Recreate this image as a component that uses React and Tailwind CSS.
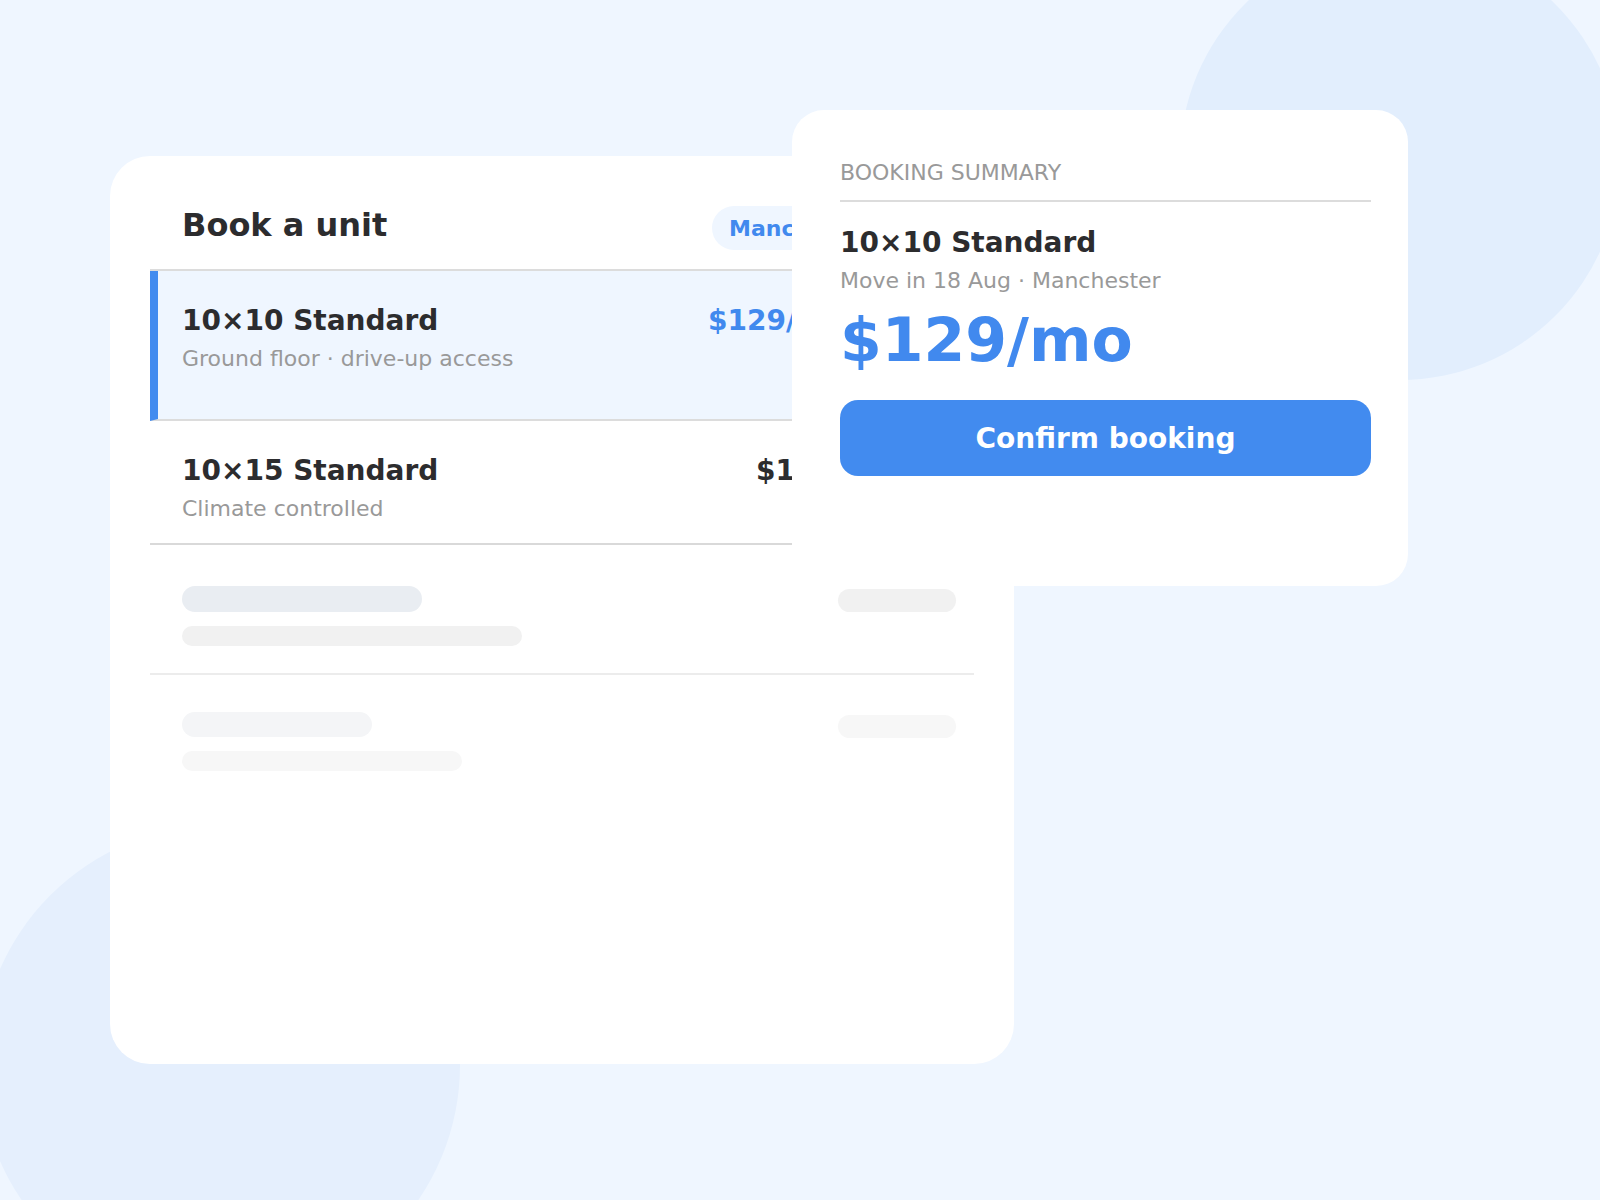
import React from 'react';

const units = [
  {
    id: 'u1',
    name: '10×10 Standard',
    note: 'Ground floor · drive-up access',
    price: '$129/mo',
    selected: true,
  },
  {
    id: 'u2',
    name: '10×15 Standard',
    note: 'Climate controlled',
    price: '$169/mo',
    selected: false,
  },
];

const SkeletonRow = ({ faint }) => (
  <div
    className={`flex justify-between pl-8 pr-[18px] ${
      faint ? 'pt-[37px]' : 'pt-[41px] pb-[27px] border-b-2 border-[#ececec]'
    }`}
  >
    <div className="flex flex-col">
      <div
        className={`rounded-full ${
          faint ? 'h-[25px] w-[190px] bg-[#f4f5f7]' : 'h-[26px] w-[240px] bg-[#e9edf2]'
        }`}
      ></div>
      <div
        className={`mt-[14px] h-[20px] rounded-full ${
          faint ? 'w-[280px] bg-[#f7f7f7]' : 'w-[340px] bg-[#f1f1f1]'
        }`}
      ></div>
    </div>
    <div
      className={`mt-[3px] h-[23px] w-[118px] rounded-full ${
        faint ? 'bg-[#f7f7f7]' : 'bg-[#f1f1f1]'
      }`}
    ></div>
  </div>
);

const App = () => {
  return (
    <div
      className="relative h-[1200px] w-[1600px] overflow-hidden bg-[#eff6ff]"
      style={{ fontFamily: '"DejaVu Sans", Verdana, sans-serif' }}
    >
      {/* background blobs */}
      <div className="absolute left-[1180px] top-[-60px] h-[440px] w-[440px] rounded-full bg-[#e2eefd]"></div>
      <div className="absolute left-[-20px] top-[825px] h-[480px] w-[480px] rounded-full bg-[#e5effd]"></div>

      <div className="relative pl-[110px] pt-[156px]">
        {/* Unit list card */}
        <div className="h-[908px] w-[904px] rounded-[40px] bg-white px-10 pt-[50px]">
          <div className="flex h-[65px] items-start border-b-2 border-[#dcdcdc] px-8">
            <h1 className="w-[530px] text-[32px] font-bold leading-[38px] text-[#2c2c2e]">Book a unit</h1>
            <span className="flex h-[44px] items-center whitespace-nowrap rounded-full bg-[#eff6ff] px-[17px] text-[22px] font-bold text-[#4189ee]">
              Manchester
            </span>
          </div>

          {units.map((u) =>
            u.selected ? (
              <div
                key={u.id}
                className="flex border-b-2 border-l-8 border-b-[#dcdcdc] border-l-[#428bef] bg-[#eff6ff] pb-[47px] pl-6 pt-[33px]"
              >
                <div className="w-[526px]">
                  <div className="text-[28px] font-bold leading-[34px] text-[#2c2c2e]">{u.name}</div>
                  <div className="mt-[8px] text-[22px] leading-[26px] text-[#999999]">{u.note}</div>
                </div>
                <div className="text-[28px] font-bold leading-[34px] text-[#4189ee]">{u.price}</div>
              </div>
            ) : (
              <div key={u.id} className="flex border-b-2 border-[#d9d9d9] pb-[21px] pl-8 pt-[33px]">
                <div className="w-[574px]">
                  <div className="text-[28px] font-bold leading-[34px] text-[#2c2c2e]">{u.name}</div>
                  <div className="mt-[8px] text-[22px] leading-[26px] text-[#999999]">{u.note}</div>
                </div>
                <div className="text-[28px] font-bold leading-[34px] text-[#2c2c2e]">{u.price}</div>
              </div>
            )
          )}

          <SkeletonRow />
          <SkeletonRow faint />
        </div>

        {/* Booking summary, overlapping the list */}
        <div className="absolute left-[792px] top-[110px] h-[476px] w-[616px] rounded-[32px] bg-white pl-[48px] pr-[37px] pt-[50px]">
          <div className="text-[22px] leading-[26px] text-[#999999]">BOOKING SUMMARY</div>
          <div className="mt-[14px] h-[2px] bg-[#dcdcdc]"></div>
          <div className="mt-[24px] text-[28px] font-bold leading-[34px] text-[#2c2c2e]">10×10 Standard</div>
          <div className="mt-[8px] text-[22px] leading-[26px] text-[#999999]">Move in 18 Aug · Manchester</div>
          <div className="mt-[10px] text-[60px] font-bold leading-[72px] text-[#4189ee]">$129/mo</div>
          <button className="mt-[24px] flex h-[76px] w-full items-center justify-center rounded-[18px] bg-[#428bef] pt-[2px] text-[28px] font-bold text-white">
            Confirm booking
          </button>
        </div>
      </div>
    </div>
  );
};

export default App;
